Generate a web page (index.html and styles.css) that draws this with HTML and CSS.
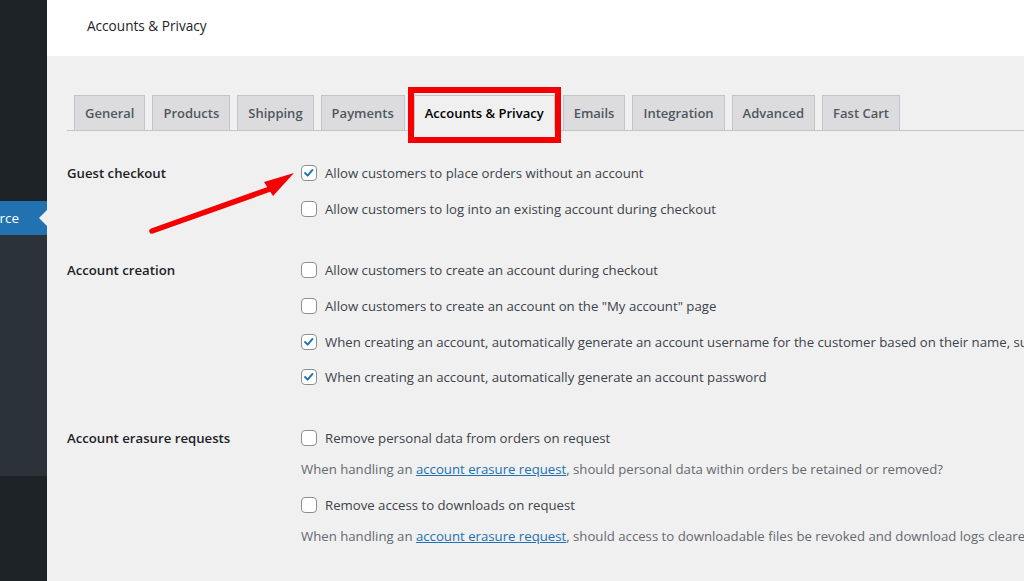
FILE: index.html
```html
<!DOCTYPE html>
<html lang="en">
<head>
<meta charset="utf-8">
<title>Accounts &amp; Privacy</title>
<link rel="stylesheet" href="styles.css">
</head>
<body>
<div class="page">
  <aside class="sidebar">
    <div class="sb-top"></div>
    <div class="sb-active"><span>WooCommerce</span></div>
    <div class="sb-sub"></div>
  </aside>
  <main class="main">
    <header class="topbar"><h1>Accounts &amp; Privacy</h1></header>
    <div class="wrap">
      <nav class="tabs">
        <a class="tab">General</a>
        <a class="tab">Products</a>
        <a class="tab">Shipping</a>
        <a class="tab">Payments</a>
        <a class="tab active">Accounts &amp; Privacy</a>
        <a class="tab">Emails</a>
        <a class="tab">Integration</a>
        <a class="tab">Advanced</a>
        <a class="tab">Fast Cart</a>
      </nav>
      <div class="form">
        <section class="group">
          <div class="label">Guest checkout</div>
          <div class="fields">
            <label class="opt"><span class="cb"><svg viewBox="0 0 16 16" width="14" height="14"><polyline points="3.5,8 6.5,11 12,4.5" fill="none" stroke="#2271b1" stroke-width="2.2" stroke-linecap="round" stroke-linejoin="round"/></svg></span>Allow customers to place orders without an account</label>
            <label class="opt"><span class="cb"></span>Allow customers to log into an existing account during checkout</label>
          </div>
        </section>
        <section class="group">
          <div class="label">Account creation</div>
          <div class="fields">
            <label class="opt"><span class="cb"></span>Allow customers to create an account during checkout</label>
            <label class="opt"><span class="cb"></span>Allow customers to create an account on the "My account" page</label>
            <label class="opt tight"><span class="cb"><svg viewBox="0 0 16 16" width="14" height="14"><polyline points="3.5,8 6.5,11 12,4.5" fill="none" stroke="#2271b1" stroke-width="2.2" stroke-linecap="round" stroke-linejoin="round"/></svg></span>When creating an account, automatically generate an account username for the customer based on their name, surname or email</label>
            <label class="opt"><span class="cb"><svg viewBox="0 0 16 16" width="14" height="14"><polyline points="3.5,8 6.5,11 12,4.5" fill="none" stroke="#2271b1" stroke-width="2.2" stroke-linecap="round" stroke-linejoin="round"/></svg></span>When creating an account, automatically generate an account password</label>
          </div>
        </section>
        <section class="group">
          <div class="label">Account erasure requests</div>
          <div class="fields">
            <label class="opt with-desc"><span class="cb"></span>Remove personal data from orders on request</label>
            <p class="desc">When handling an <a class="link">account erasure request</a>, should personal data within orders be retained or removed?</p>
            <label class="opt with-desc"><span class="cb"></span>Remove access to downloads on request</label>
            <p class="desc">When handling an <a class="link">account erasure request</a>, should access to downloadable files be revoked and download logs cleared?</p>
          </div>
        </section>
      </div>
    </div>
  </main>
  <svg class="arrow" viewBox="0 0 170 80" width="170" height="80">
    <line x1="12" y1="71" x2="130" y2="29" stroke="#f50000" stroke-width="5.5" stroke-linecap="round"/>
    <polygon points="154,13 124,22 133,36" fill="#f50000"/>
  </svg>
</div>
</body>
</html>
```
FILE: styles.css
```css
* { box-sizing: border-box; }
html, body { margin: 0; padding: 0; }
body {
  font-family: "Open Sans", "Noto Sans", sans-serif;
  font-size: 13.2px;
  color: #3c434a;
}
.page {
  position: relative;
  display: flex;
  width: 1024px;
  height: 581px;
  overflow: hidden;
  background: #f0f0f1;
}
.sidebar {
  flex: none;
  width: 47px;
  background: #1d2327;
  display: flex;
  flex-direction: column;
}
.sb-top { height: 201px; }
.sb-active {
  position: relative;
  height: 34px;
  background: #2271b1;
  color: #fff;
  display: flex;
  align-items: center;
  justify-content: flex-end;
  padding-right: 28px;
  overflow: hidden;
  white-space: nowrap;
  font-size: 13.5px;
}
.sb-active::after {
  content: "";
  position: absolute;
  right: 0;
  top: 9px;
  border-style: solid;
  border-width: 8px 8px 8px 0;
  border-color: transparent #f0f0f1 transparent transparent;
}
.sb-sub { height: 241px; background: #2c3338; }
.main {
  flex: 1;
  min-width: 0;
  overflow: hidden;
}
.topbar {
  height: 56px;
  background: #fff;
  padding: 16px 0 0 40px;
}
.topbar h1 {
  margin: 0;
  font-size: 13.6px;
  line-height: 20px;
  font-weight: 500;
  color: #1d2327;
}
.wrap { padding: 39px 0 0 20px; }
.tabs {
  display: flex;
  border-bottom: 1px solid #c3c4c7;
  white-space: nowrap;
}
.tab {
  position: relative;
  margin: 0 0 -1px 7px;
  padding: 5px 10px;
  line-height: 24px;
  font-size: 13px;
  font-weight: 600;
  color: #50575e;
  background: #dcdcde;
  border: 1px solid #c3c4c7;
}
.tab.active {
  margin-left: 9px;
  padding: 5px 10px;
  color: #000;
  background: #f0f0f1;
  border-bottom-color: #f0f0f1;
}
.tab.active::after {
  content: "";
  position: absolute;
  left: -7px;
  right: -7px;
  top: -9px;
  bottom: -13px;
  border: 6px solid #f50000;
}
.tab.active + .tab { margin-left: 8px; }
.form { padding-top: 32px; }
.group {
  display: grid;
  grid-template-columns: 234px 1fr;
  margin-bottom: 41px;
}
.label {
  font-weight: 600;
  line-height: 20px;
  color: #1d2327;
}
.fields { white-space: nowrap; }
.opt {
  display: flex;
  align-items: center;
  gap: 8px;
  line-height: 20px;
  margin-bottom: 16px;
}
.opt.tight { margin-bottom: 15px; }
.opt.with-desc { margin-bottom: 11px; }
.desc {
  margin: 0 0 16px;
  line-height: 20px;
  color: #646970;
}
.fields > :last-child { margin-bottom: 0; }
.cb {
  flex: none;
  width: 16px;
  height: 16px;
  border: 1px solid #8c8f94;
  border-radius: 4px;
  background: #fff;
  display: flex;
  align-items: center;
  justify-content: center;
}
.cb svg { display: block; }
.link { color: #2271b1; text-decoration: underline; }
.arrow {
  position: absolute;
  left: 140px;
  top: 160px;
}
```
